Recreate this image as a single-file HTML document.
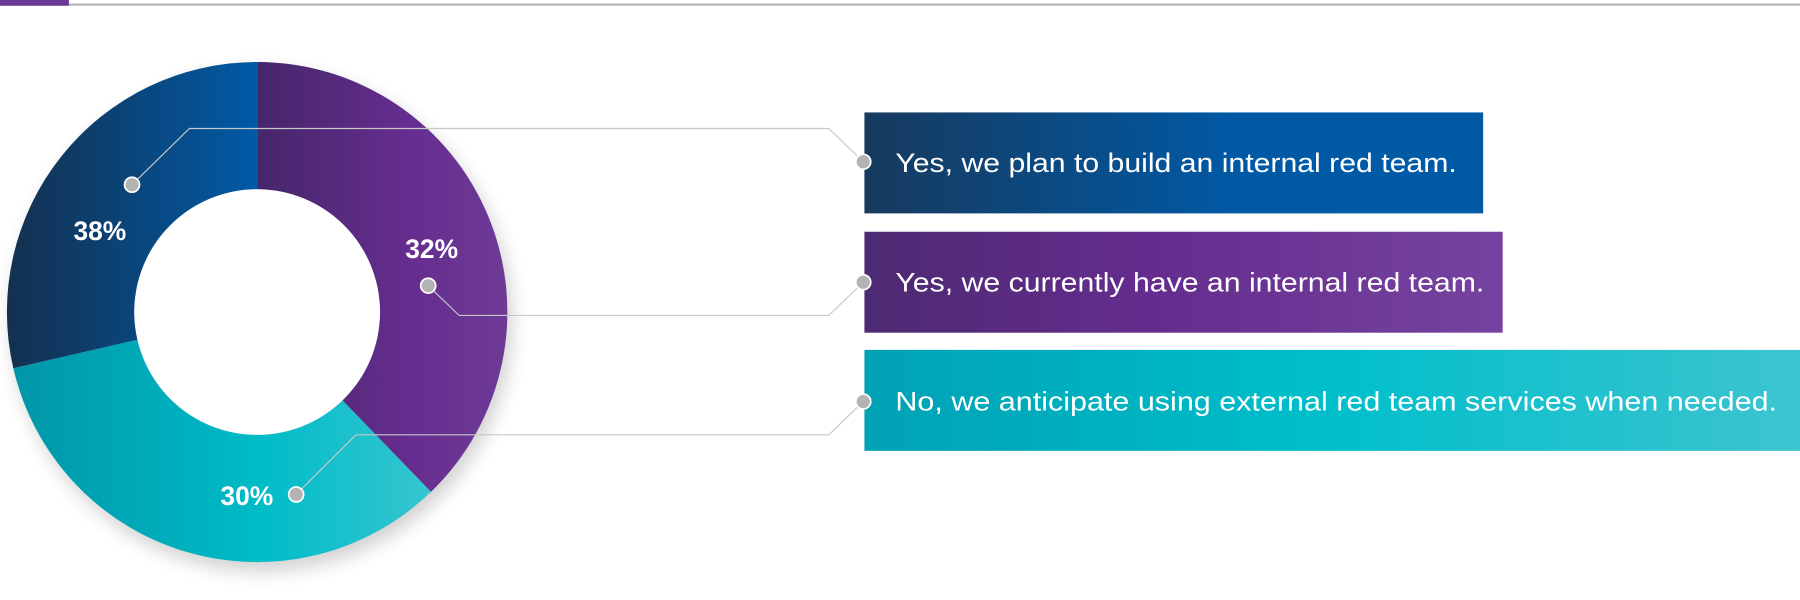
<!DOCTYPE html>
<html><head><meta charset="utf-8"><style>
html,body{margin:0;padding:0;background:#fff;width:1800px;height:600px;overflow:hidden}
svg{display:block}
</style></head><body>
<svg width="1800" height="600" viewBox="0 0 1568 523" preserveAspectRatio="none" xmlns="http://www.w3.org/2000/svg">
<defs>
<linearGradient id="gn" gradientUnits="userSpaceOnUse" x1="6" y1="0" x2="224" y2="0"><stop offset="0" stop-color="#14304f"/><stop offset="1" stop-color="#005aa6"/></linearGradient>
<linearGradient id="gp" gradientUnits="userSpaceOnUse" x1="224" y1="0" x2="442" y2="0"><stop offset="0" stop-color="#46266a"/><stop offset="0.6" stop-color="#652d8f"/><stop offset="1" stop-color="#6e3a96"/></linearGradient>
<linearGradient id="gt" gradientUnits="userSpaceOnUse" x1="12" y1="0" x2="375" y2="0"><stop offset="0" stop-color="#0096a8"/><stop offset="0.6" stop-color="#00bcc8"/><stop offset="1" stop-color="#35c6d0"/></linearGradient>
<linearGradient id="b1" x1="0" y1="0" x2="1" y2="0"><stop offset="0" stop-color="#173a5e"/><stop offset="0.6" stop-color="#0059a5"/><stop offset="1" stop-color="#005aa6"/></linearGradient>
<linearGradient id="b2" x1="0" y1="0" x2="1" y2="0"><stop offset="0" stop-color="#4c2a72"/><stop offset="0.45" stop-color="#652c8e"/><stop offset="1" stop-color="#7643a0"/></linearGradient>
<linearGradient id="b3" x1="0" y1="0" x2="1" y2="0"><stop offset="0" stop-color="#00a2b4"/><stop offset="0.5" stop-color="#00bfcb"/><stop offset="1" stop-color="#3cc4d0"/></linearGradient>
<filter id="sh" x="-20%" y="-20%" width="140%" height="140%"><feGaussianBlur stdDeviation="8"/></filter>
</defs>
<rect x="0" y="3" width="1568" height="2" fill="#b8b8b8"/>
<rect x="0" y="0" width="60" height="5" fill="#6b3a96"/>
<circle cx="228" cy="280" r="218" fill="#000" opacity="0.18" filter="url(#sh)"/>
<path d="M224,54 A218,218 0 0 1 375.4,428.8 L298.3,349 A107,107 0 0 0 224,165 Z" fill="url(#gp)"/>
<path d="M375.4,428.8 A218,218 0 0 1 11.6,321 L119.7,296.1 A107,107 0 0 0 298.3,349 Z" fill="url(#gt)"/>
<path d="M11.6,321 A218,218 0 0 1 224,54 L224,165 A107,107 0 0 0 119.7,296.1 Z" fill="url(#gn)"/>
<circle cx="224" cy="272" r="107" fill="#fff"/>
<rect x="753" y="98" width="539" height="88" fill="url(#b1)"/>
<rect x="753" y="202" width="556" height="88" fill="url(#b2)"/>
<rect x="753" y="305" width="815" height="88" fill="url(#b3)"/>
<g fill="none" stroke="#c8c8c8" stroke-width="1">
<polyline points="115,161 165,112 722,112 752,141"/>
<polyline points="373,249 400,275 722,275 752,246"/>
<polyline points="258,431 310,379 722,379 752,350"/>
</g>
<g fill="#b3b3b3" stroke="#fff" stroke-width="1.5">
<circle cx="115" cy="161" r="6.5"/><circle cx="373" cy="249" r="6.5"/><circle cx="258" cy="431" r="6.5"/>
<circle cx="752" cy="141" r="6.5"/><circle cx="752" cy="246" r="6.5"/><circle cx="752" cy="350" r="6.5"/>
</g>
<g font-family="Liberation Sans, sans-serif" font-weight="bold" font-size="23" fill="#fff" text-anchor="middle">
<text x="87" y="209">38%</text><text x="376" y="225">32%</text><text x="215" y="440">30%</text>
</g>
<g font-family="Liberation Sans, sans-serif" font-size="23.5" fill="#fff">
<text x="780" y="150" textLength="489" lengthAdjust="spacingAndGlyphs">Yes, we plan to build an internal red team.</text>
<text x="780" y="254" textLength="513" lengthAdjust="spacingAndGlyphs">Yes, we currently have an internal red team.</text>
<text x="780" y="358" textLength="768" lengthAdjust="spacingAndGlyphs">No, we anticipate using external red team services when needed.</text>
</g>
</svg>
</body></html>
